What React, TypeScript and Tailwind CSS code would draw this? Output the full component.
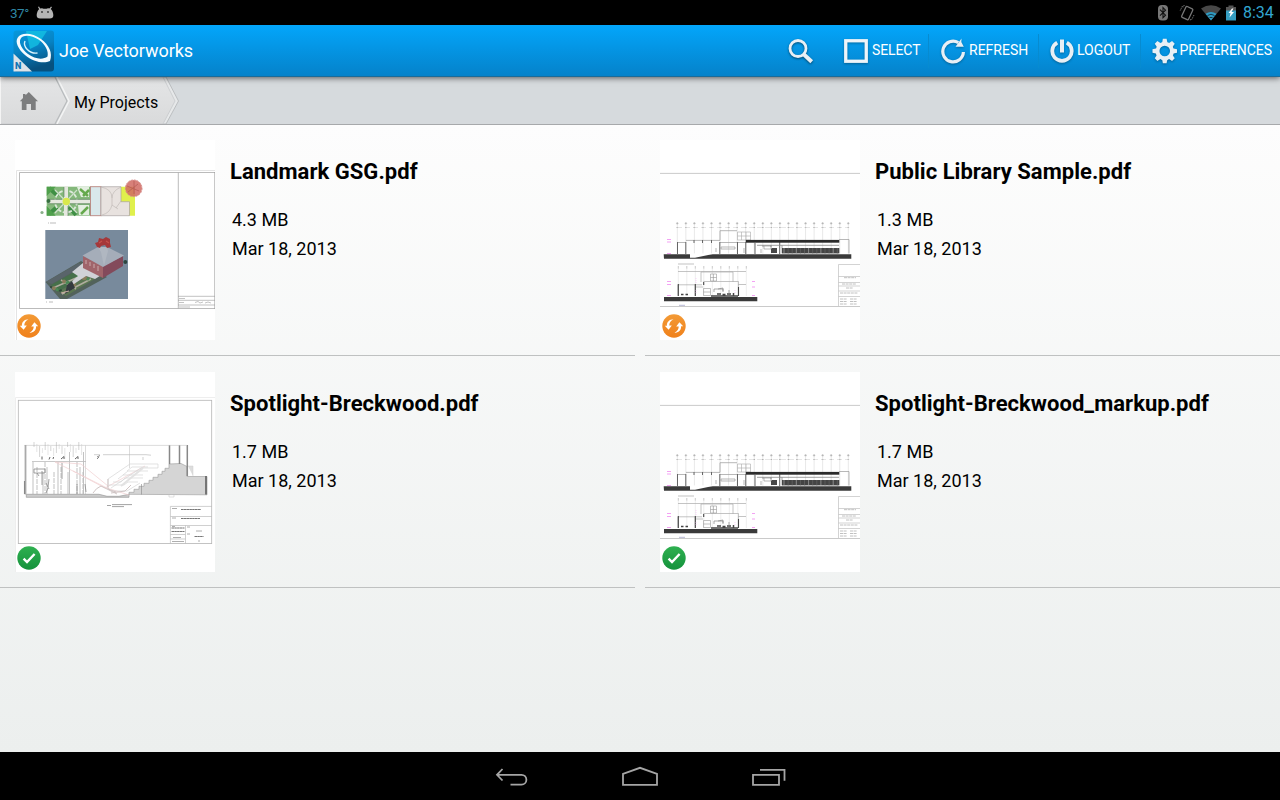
import type { ReactNode } from 'react';

type FileStatus = 'sync' | 'done';

interface ProjectFile {
  name: string;
  size: string;
  date: string;
  status: FileStatus;
  preview: ReactNode;
}

const range = (n: number) => Array.from({ length: n }, (_, i) => i);

/* ---------- Previews ---------- */

function LandmarkPreview() {
  return (
    <svg viewBox="0 0 200 200" className="block size-[200px] bg-white">
      <path d="M1.5 200V30.5H200" fill="none" stroke="#e4e4e4" />
      <path d="M200 32.5H4.5V168.5H200M163.3 32.5V168.5" fill="none" stroke="#aaa" strokeWidth="0.8" />
      <path d="M199.6 32V169M163 156.3h37M163 160.3h37M163 165h37" fill="none" stroke="#999" strokeWidth="0.6" />
      <path d="M164 158.5h6M164 162.5h5M164 167h11M180 162.5l3 -1 2 1.5 3 -1M190 163l3 -1 3 1" stroke="#aaa" strokeWidth="0.7" fill="none" />

      {/* Plan view */}
      <rect x="31.7" y="46.7" width="44" height="29" fill="#84b87b" />
      <path d="M34 48l9 8M34 74l8 -7M61 75l-7 -8" stroke="#3f8f45" strokeWidth="4" />
      <path d="M31.7 66l9 9.7h-9zM31.7 56v-9.300h9z" fill="#4fa04c" />
      <path d="M62 47h12v10h-8zM63 65h11v10h-10z" fill="#e3eee0" />
      <path d="M65 49l8 7M66 74l7 -7M68 56l6 -6" stroke="#65a94c" strokeWidth="2.500" />
      <circle cx="51" cy="61.5" r="11" fill="none" stroke="#dce8da" strokeWidth="1.8" strokeDasharray="4 1.5" />
      <path d="M40 50l22 23M62 50L40 73" stroke="#cfe0cb" strokeWidth="1.200" />
      <path d="M33 61.5H76M51 46V76" stroke="#e5e8df" strokeWidth="4" />
      <path d="M33 59.3h14M33 63.8h14M55 59.3h20M55 63.8h20M49 47v10M53 66v10" stroke="#56785a" strokeWidth="0.6" />
      <circle cx="51.3" cy="61.5" r="3.7" fill="#d9e94c" />
      <circle cx="33.5" cy="61" r="2" fill="#376f40" />
      <circle cx="27" cy="72.5" r="1.6" fill="#8ab08a" />
      <rect x="75.5" y="46.7" width="10.5" height="29" fill="#d9e8eb" stroke="#b9857f" strokeWidth="0.9" />
      <path d="M106 46.7h14v29h-7V62h-7z" fill="#e0f04c" />
      <path d="M86 46.7h20v15h8.500v14H86z" fill="#e8e2df" stroke="#aaa4a2" strokeWidth="0.7" />
      <path d="M86 47q11 2 11 11v7q-2 8 -10 10M106 47q-9 4 -9 11M97 65l6 4M106 61l-5 7" fill="none" stroke="#bab3b0" strokeWidth="0.6" />
      <circle cx="118.7" cy="48.3" r="8.3" fill="#d06a62" fillOpacity="0.85" stroke="#d58a88" strokeDasharray="2 1" />
      <path d="M112 46l12 5M119 41v13M113 52l10 -8" stroke="#b85c58" strokeWidth="0.8" />
      <path d="M33 83h1M35 83h6M31 162h1M34 162h4" stroke="#aaa" strokeWidth="0.8" />

      {/* Perspective view */}
      <rect x="30.3" y="90" width="82.7" height="69" fill="#788a9c" />
      <path d="M30.5 142L66 121 92 137 52 159h-7z" fill="#52625b" />
      <path d="M31 142L64 123l4 3 -31 18z" fill="#59646a" />
      <path d="M36 145l27 -15 9 4 -29 18z" fill="#46704a" />
      <path d="M44 151l30 -15 6 3 -29 17z" fill="#5a7652" />
      <path d="M38 148l30 -13M47 154l29 -15M46 140l15 9" stroke="#b0ad9f" strokeWidth="1.500" />
      {range(16).map((i) => (
        <circle
          key={i}
          cx={36 + ((i * 17) % 41)}
          cy={147 - ((i * 17) % 41) * 0.42 + (i % 4) * 2.5}
          r={1 + (i % 3) * 0.5}
          fill={i % 3 === 0 ? '#2b4836' : i % 3 === 1 ? '#4b8a56' : '#8a7c5b'}
        />
      ))}
      <path d="M57 132l11 -9 20 11 -8 5 -9 -3 -12 8 -4 -1 8 -7z" fill="#d0d2d6" />
      <path d="M50 154l2 -9 5 -4 3 7z" fill="#343b3f" />
      <path d="M46 153l8 -2" stroke="#c9b0a0" strokeWidth="1" />
      <path d="M68 116l20 10v12L68 128z" fill="#a0646a" />
      <path d="M88 126l20 -10v10l-20 12z" fill="#834a5b" />
      <path d="M71 120v4M75 122v4M79 124v4M83 126v5" stroke="#cba9aa" strokeWidth="1" />
      <path d="M67.5 115.5L83 107h9l17 8.5L88 127z" fill="#a5adb9" />
      <path d="M83 107l3 5 3 14 4 -15 -1 -4z" fill="#b0b7c1" />
      <path d="M82 107l-2 -4 3 -1 1 -4 4 1 3 -2 4 2v4l1 4 -4 1 -2 -3 -4 1 -1 2z" fill="#a5383a" />
      <path d="M84 103l3 -2M91 101l3 2" stroke="#c4514b" strokeWidth="1.300" />
      <circle cx="110.3" cy="122" r="2" fill="#2d463f" />
    </svg>
  );
}

function LibraryPreview() {
  return (
    <svg viewBox="0 0 200 200" className="block size-[200px] bg-white">
      <path d="M0 33.4H200M0 166.5H200" stroke="#c4c4c4" strokeWidth="0.9" />

      {/* Long elevation */}
      {range(21).map((i) => (
        <g key={i} stroke="#bbb">
          <path d={`M${17.3 + i * 8.55} 85V113.5`} strokeWidth="0.35" />
          <circle cx={17.3 + i * 8.55} cy="83.4" r="0.9" fill="#b5b5b5" strokeWidth="0.4" />
          <path d={`M${16.5 + i * 8.55} 87.5h1.6`} stroke="#999" strokeWidth="0.7" />
        </g>
      ))}
      <path d="M17 87.5H189" stroke="#ccc" strokeWidth="0.5" strokeDasharray="5 3" />
      <path d="M17 102.5h9M26 100.4h34M60 90.7h17M60 90.7v9.6M179 99.5h10v14M60 102.5h26" fill="none" stroke="#999" strokeWidth="0.7" />
      <path d="M77.5 92h13v8h-13zM77.5 96h13M81.5 92v8M86 92v8" fill="none" stroke="#aaa" strokeWidth="0.6" />
      <path d="M17.5 102v12M25.8 102v12M59.8 102v12M77.5 102v12M85.8 102v12M119.7 102v12M95 103v11M34 100v3M42.5 100v3M51.5 100v3" stroke="#666" strokeWidth="1" />
      <path d="M61 107h14v2H61zM104 106h7v3h-7zM84 108v5M101 109v4M56 108v4" fill="none" stroke="#999" strokeWidth="0.7" />
      <rect x="85.8" y="99.9" width="93.5" height="2.8" fill="#2b2b2b" />
      <path d="M97 105.3h82M122 105.3v8M103 105v2M111 105v2" stroke="#888" strokeWidth="0.8" />
      <rect x="122" y="108" width="57.3" height="5.4" fill="#444" />
      {range(14).map((i) => (
        <path key={i} d={`M${124 + i * 4.1} 108v5.5`} stroke={i % 3 ? '#666' : '#aaa'} strokeWidth="0.7" />
      ))}
      <path d="M111 113v-4l1 -1h5v5z" fill="#484848" />
      <path d="M3.7 114.3h187.6v4.5H4z" fill="#3a3a3a" />
      <path d="M30 113.8h24l-19 4h-5z" fill="#fff" />

      {/* Short elevation */}
      {range(9).map((i) => (
        <g key={i}>
          <path d={`M${18.3 + i * 8.5} 128V156`} stroke="#ccc" strokeWidth="0.35" />
          <path d={`M${18.3 + i * 8.5} 126v2.500`} stroke="#bbb" strokeWidth="0.8" />
        </g>
      ))}
      <path d="M18 131.5h68M18 124h16M41 132h32v10M41 132v10M18 144.8h24M18 144.8v11M35.3 145v11M35 147h8M43.5 141.5h35v14M78 144.500h8" fill="none" stroke="#aaa" strokeWidth="0.7" />
      <path d="M50.5 134h6v7h-6zM50.5 137.5h6M53.5 134v7M43.5 148.5h7v7h-7zM43.5 152h7" fill="none" stroke="#999" strokeWidth="0.6" />
      <path d="M18.3 144v12M35.3 144v12M78.5 147v9M43.7 142v3" stroke="#444" strokeWidth="1.1" />
      <path d="M21 154.500h2.500M25.500 154.500h2.500M57 154h4M62.500 154.500h3M67 154h4M73.500 153v3M51 156h27" fill="none" stroke="#444" strokeWidth="1.500" />
      <path d="M54 152v-3h9v2M58 149l5 -1v4M69 150v4" fill="none" stroke="#888" strokeWidth="0.700" />
      <path d="M4 157h93.3v4.2H4z" fill="#3a3a3a" />
      <path d="M7 99.5h4M7 102h4M7 113.5h4M7 141.5h4M7 144.5h4M7 155.5h4M92 141.5h3M92 147h3M92 155.5h3" stroke="#f08af0" strokeWidth="0.8" />
      <path d="M36 138v5M36 150v4M75 150v4" stroke="#f5b5f5" strokeWidth="0.6" strokeDasharray="1 1" />
      <path d="M19 165.3h6" stroke="#88b" strokeWidth="0.6" />

      {/* Title block */}
      <path d="M178.5 166V124.5H200M178.5 136.5H200M178.5 142.5H200M178.5 146H200M178.5 151H200M178.5 156.5H200" fill="none" stroke="#c0c0c0" strokeWidth="0.7" />
      <path d="M184 137.7h12M182 144h14M186 148h7M180 153h18M180 159h7M190 159h7M180 161.5h7M190 161.5h7M180 164h7M190 164h7" stroke="#b0b0b0" strokeWidth="0.8" strokeDasharray="3 0.6" />
    </svg>
  );
}

function SpotlightPreview() {
  return (
    <svg viewBox="0 0 200 200" className="block size-[200px] bg-white">
      <path d="M0.5 200V25.5H200" fill="none" stroke="#eee" />
      <rect x="3.3" y="28.3" width="193.4" height="143.3" fill="none" stroke="#b5b5b5" strokeWidth="0.8" />

      {/* Section through the stage and seating */}
      <path
        d="M114 122.3v-2h5v-3h5v-3h5v-3h5v-3h4v-3h5v-3h4v-3h3v-3h4V92l12 -0.5 6 3v10h20v18.3z"
        fill="#d5d5d5"
        stroke="#a5a5a5"
        strokeWidth="0.7"
      />
      <path d="M126.5 112v10.5" stroke="#888" strokeWidth="0.6" />
      <path d="M154.5 73v19M164.5 73v19M172.3 73v31" stroke="#888" strokeWidth="1.5" />
      <path d="M191 104v18.5" stroke="#666" strokeWidth="1.7" />
      <path d="M173 94h5v10" fill="#ddd" stroke="#ccc" strokeWidth="0.5" />
      <path d="M9.5 73.4H172M114.5 73.4V96M70.5 73.4v49" fill="none" stroke="#c5c5c5" strokeWidth="0.6" />
      <path d="M10.5 73v49.5" stroke="#aaa" strokeWidth="1.800" />
      <path d="M9.5 109v13" stroke="#888" strokeWidth="1.1" />
      <path d="M11.3 122.3H84l8 2h12l10 -2v3H11.3z" fill="#ccc" stroke="#999" strokeWidth="0.7" />

      {/* Rigging */}
      <path d="M17 89.5h54" stroke="#bbb" strokeWidth="0.8" />
      {range(18).map((i) => (
        <path key={i} d={`M${19 + i * 2.8} ${70 + (i % 4) * 2}v${5 + (i % 3) * 3}`} stroke={i % 2 ? '#ccc' : '#aaa'} strokeWidth="0.5" />
      ))}
      {[18, 22, 28, 30, 32, 39, 43, 46, 53, 62, 65, 68].map((x, i) => (
        <path key={x} d={`M${x} ${90 + (i % 3) * 5}V122`} stroke="#999" strokeWidth="0.6" strokeDasharray={i % 2 ? '5 1' : undefined} />
      ))}
      <path d="M27 84.500v3M34 87.500l1 -2.500M38 87l0.600 -2M46 87l3 -2.500v2.500M60 87l3 -2.500v2.500" fill="none" stroke="#666" strokeWidth="1" />
      <path d="M19 97h11v4H19zM22 101l2 3M34 107l-1 8M47 91v16M27 99v14M31 111l3 6M33 116l-2 5M62 112v10M70 112l1 8" fill="none" stroke="#888" strokeWidth="0.800" />
      <path d="M54.5 80v42M68.5 80v42" stroke="#bbb" strokeWidth="0.9" />
      <path d="M82 85l3 -1.500M82 87l2 -2" stroke="#888" strokeWidth="1" />
      <path d="M88 82.7h43M85 82.7h-6M131 82.7l5 0.5M128 85v3" stroke="#bbb" strokeWidth="0.7" />
      <path d="M40 90l52 26 22 7M40 90l26 2 27 22M58 99l32 17 40 -22" fill="none" stroke="#f0cfd0" strokeWidth="0.7" />

      {/* Seating rows */}
      <path d="M93 115v-8l22 -15h28v4M96 116l30 -20h17M98 110h8l4 -4h18M103 107l5 -4h20M108 103l5 -4h20M112 99l5 -4h16M94 113h15l4 -3h10M98 119h14l13 -8" fill="none" stroke="#d5d5d5" strokeWidth="0.7" />
      <path d="M93 107v10l8 3M96 121l14 -2 6 -6M78 121q3 -5 8 -7l16 8" fill="none" stroke="#d0c5c5" strokeWidth="1" />
      <path d="M128 96l-22 18" stroke="#e2e2e2" strokeWidth="2" />
      <path d="M154 123v2h5v-2" fill="none" stroke="#ccc" strokeWidth="0.6" />

      {/* Title block */}
      <path d="M92 133.5h4M97 132.6h20M97 134.6h12" stroke="#999" strokeWidth="0.9" />
      <path d="M155.4 171.5V134.4H197M155.4 144.5H197M155.4 153.5H197M155.4 162.5h15M170.5 153.5v18M155.4 167h15" fill="none" stroke="#bbb" strokeWidth="0.7" />
      <path d="M166 137.5h20M166 146.5h19M156.5 156h13M156.5 159.5h13M179.5 164.500h9" stroke="#777" strokeWidth="1.1" strokeDasharray="2.5 0.3" />
      <path d="M157 136.5h5M157 146h4M157 154.5h3M158 165.5h8M157 169.5h12M181 159h6M172 155h3M172 162h3M184 168v2" stroke="#999" strokeWidth="0.8" />
    </svg>
  );
}

/* ---------- Icons ---------- */

function StatusBadge({ status }: { status: FileStatus }) {
  if (status === 'sync') {
    return (
      <svg viewBox="0 0 24 24" className="absolute left-[2px] top-[174px] size-6">
        <defs>
          <linearGradient id="sync" x1="0" y1="0" x2="0" y2="1">
            <stop offset="0" stopColor="#f39a35" />
            <stop offset="1" stopColor="#f0811c" />
          </linearGradient>
        </defs>
        <circle cx="12" cy="12" r="11.7" fill="url(#sync)" />
        <path d="M11.5 5.2C7.500 5.200 4.600 8 4.900 11.800L2.800 11.800 6.600 15.800 9.800 11.500 7.300 11.600C7.200 9 8.600 6.800 11.500 5.200z" fill="#fff" />
        <path d="M12.500 18.800C16.500 18.800 19.400 16 19.100 12.200L21.200 12.200 17.400 8.200 14.200 12.500 16.700 12.400C16.800 15 15.400 17.200 12.500 18.800z" fill="#fff" />
      </svg>
    );
  }
  return (
    <svg viewBox="0 0 24 24" className="absolute left-[2px] top-[174px] size-6">
      <defs>
        <linearGradient id="done" x1="0" y1="0" x2="0" y2="1">
          <stop offset="0" stopColor="#2fb050" />
          <stop offset="1" stopColor="#15923c" />
        </linearGradient>
      </defs>
      <circle cx="12" cy="12" r="11.7" fill="url(#done)" />
      <path d="M6.6 12.6l3.4 3.4 7.600 -8" fill="none" stroke="#fff" strokeWidth="2.4" />
    </svg>
  );
}

function AppLogo() {
  return (
    <svg viewBox="0 0 42 42" className="size-[42px]">
      <defs>
        <linearGradient id="logo" x1="0" y1="0" x2="0.3" y2="1">
          <stop offset="0" stopColor="#0798dc" />
          <stop offset="0.5" stopColor="#0783c4" />
          <stop offset="1" stopColor="#07517f" />
        </linearGradient>
      </defs>
      <rect x="0.5" y="0.5" width="40.5" height="41" rx="3" fill="url(#logo)" />
      <path d="M13 1h21l-9 14 -8 4z" fill="#16c4e4" fillOpacity="0.75" />
      <path
        d="M37 31C31 34 20 32 12 25 5 19 2 12 4.500 8 8 2 19 2.500 28 9c8 6 12 14 9 22zM34.500 26.500C36 21 32 14 25.500 9.500 18 4.500 9.500 4.500 7.500 9 5.500 13 9 19.500 15 24c7 5.200 15 6 19.500 2.500z"
        fill="#f5fbff"
        fillRule="evenodd"
      />
      <path d="M12 11c-2.500 5.500 4.500 13 12.500 12" fill="none" stroke="#d9f2fb" strokeWidth="1.4" />
      <path d="M0.5 23.5L19 41.5H0.5z" fill="#dce3e9" />
      <text x="2" y="39" fontFamily="Roboto, sans-serif" fontSize="9" fontWeight="900" fill="#1675b4">N</text>
    </svg>
  );
}

function SearchIcon() {
  return (
    <svg viewBox="0 0 26 26" className="size-[26px] drop-shadow-[0_1px_1px_rgba(0,0,0,0.5)]" fill="none" stroke="#e8eff5">
      <circle cx="10" cy="10.5" r="8" strokeWidth="2.8" />
      <path d="M15.7 16.2l8 7.500" strokeWidth="4" />
    </svg>
  );
}

function SelectIcon() {
  return (
    <svg viewBox="0 0 24 24" className="size-6 drop-shadow-[0_1px_1px_rgba(0,0,0,0.3)]" fill="none" stroke="#eef4f9">
      <rect x="1.75" y="1.75" width="20.5" height="20.5" strokeWidth="3.300" />
    </svg>
  );
}

function RefreshIcon() {
  return (
    <svg viewBox="0 0 26 26" className="size-[26px] drop-shadow-[0_1px_1px_rgba(0,0,0,0.3)]">
      <path d="M18.300 4.600A10.300 10.300 0 1 0 23.400 14" fill="none" stroke="#e8eff5" strokeWidth="3.2" />
      <path d="M15.500 8.700l6 -8.200 -.2 3.500 2.500 4.700z" fill="#e8eff5" />
    </svg>
  );
}

function LogoutIcon() {
  return (
    <svg viewBox="0 0 24 24" className="size-6 drop-shadow-[0_1px_1px_rgba(0,0,0,0.3)]" fill="none" stroke="#e8eff5">
      <path d="M7.2 3.700a9.700 9.700 0 1 0 9.600 0" strokeWidth="3.800" />
      <path d="M12 0.500v13" strokeWidth="4" />
    </svg>
  );
}

function GearIcon() {
  return (
    <svg viewBox="-13 -13 26 26" className="size-[26px] drop-shadow-[0_1px_1px_rgba(0,0,0,0.3)]">
      {range(8).map((i) => (
        <path key={i} d="M-1.900 -12.500h3.800l.9 4.500h-5.600z" fill="#e8eff5" transform={`rotate(${i * 45})`} />
      ))}
      <circle r="7.4" fill="none" stroke="#e8eff5" strokeWidth="4" />
    </svg>
  );
}

/* ---------- Bars ---------- */

function StatusBar() {
  return (
    <div className="flex h-[25px] items-center justify-between bg-black pl-[10px] pr-[6px]">
      <div className="flex items-center gap-[7px]">
        <span className="w-[19px] whitespace-nowrap pt-[2px] text-[13.5px] leading-none tracking-[-0.5px] text-[#2f86a3]">37°</span>
        <svg viewBox="0 0 18 14" className="h-[14px] w-[18px]" fill="#b4b4b4">
          <path d="M4 3.5L2.5 .8M13.5 3.5L15.5 .8" stroke="#b4b4b4" strokeWidth="1.2" />
          <path d="M1 7Q2 2.5 6 2.3q3 1 6 0Q16 2.5 17 7q1.5 6 -4 5.5H5Q-.5 13 1 7z" />
          <circle cx="6" cy="6" r="0.9" fill="#333" />
          <circle cx="12" cy="6" r="0.9" fill="#333" />
        </svg>
      </div>
      <div className="flex items-center">
        <svg viewBox="0 0 10 16" className="h-4 w-[10px]">
          <rect width="10" height="15.5" rx="4" fill="#777" />
          <path d="M2 4.7l5.5 5.5L5 12.7v-10l2.5 2.5L2 10.7" fill="none" stroke="#111" strokeWidth="1.1" />
        </svg>
        <svg viewBox="0 0 16 18" className="ml-[11px] h-[18px] w-4" fill="none" stroke="#777">
          <rect x="4.500" y="3" width="7.500" height="12" rx="1" transform="rotate(25 8 9)" strokeWidth="1.3" />
          <path d="M3.500 2L1 7M5.300 1L4 3.500M15 11l-2.500 5M12 15l-1 2" strokeDasharray="1.5 1" />
        </svg>
        <svg viewBox="0 0 20 16" className="ml-[6px] h-4 w-5">
          <path d="M0 3.5Q10 -3 20 3.5L10 15.5z" fill="#484848" />
          <path d="M4.5 8.8Q10 5 15.5 8.8L10 15.500z" fill="#2f9cc4" />
          <path d="M6.5 10.5q3.5 -2.5 7 0M8.5 12.5h3" stroke="#163947" fill="none" />
        </svg>
        <svg viewBox="0 0 10 16" className="ml-[5px] h-4 w-[10px]">
          <path d="M0 2h2.5V.5h5V2H10v5H0z" fill="#555" />
          <path d="M0 5.5h10v10H0z" fill="#359ec2" />
          <path d="M6 3.5L2.5 8h2L3.5 12.5 8 7H5.5l2 -3.5z" fill="#fff" />
        </svg>
        <span className="ml-[7px] w-[31px] whitespace-nowrap pt-px text-[16px] leading-none text-[#33a5d0]">8:34</span>
      </div>
    </div>
  );
}

function ActionBar() {
  return (
    <header className="relative z-10 flex h-[52px] items-center border-b border-[#1c6b98] bg-gradient-to-b from-[#03a6fb] to-[#0582ca] pl-[13px] text-white shadow-[0_1px_6px_rgba(0,0,0,0.6)]">
      <AppLogo />
      <h1 className="ml-1 text-[18px] tracking-[-0.05px]">Joe Vectorworks</h1>
      <nav className="ml-auto flex h-full items-center pr-2 text-[14px]">
        <button className="flex w-[44px]"><SearchIcon /></button>
        <button className="ml-3 flex w-[84px] items-center gap-[4px]"><SelectIcon /><span className="tracking-[-0.100px]">SELECT</span></button>
        <span className="h-[34px] w-px bg-[#078bd0]" />
        <button className="ml-[11px] flex w-[98px] items-center gap-[3px]"><RefreshIcon />REFRESH</button>
        <span className="h-[34px] w-px bg-[#078bd0]" />
        <button className="ml-[11px] flex w-[90px] items-center gap-[3px]"><LogoutIcon />LOGOUT</button>
        <span className="h-[34px] w-px bg-[#078bd0]" />
        <button className="ml-[11px] flex w-[120px] items-center gap-[2px]"><GearIcon /><span className="tracking-[-0.050px]">PREFERENCES</span></button>
      </nav>
    </header>
  );
}

function Breadcrumbs() {
  return (
    <div className="relative h-12 border-b border-[#a7a9ab] bg-[#d6dadd]">
      <svg viewBox="0 0 200 47" className="absolute left-0 top-0 h-[47px] w-[200px]">
        <defs>
          <linearGradient id="crumb" x1="0" y1="0" x2="0" y2="1">
            <stop offset="0" stopColor="#e4e5e6" />
            <stop offset="1" stopColor="#d9dadb" />
          </linearGradient>
        </defs>
        <path d="M0 0H166L178.500 24 166 47H0z" fill="#e6e8e9" stroke="#bbbec0" />
        <path d="M0 0H163L175 24 163 47H0z" fill="url(#crumb)" stroke="#c6c9cb" strokeWidth="0.8" />
        <path d="M55 0L67 24 55 47" fill="none" stroke="#b8bbbd" strokeWidth="1.2" />
        <path d="M57 0L69 24 57 47" fill="none" stroke="#f3f4f4" strokeWidth="1.500" />
        <path d="M0.5 0V47" stroke="#f4f4f4" />
        <path d="M28.8 15L38 24.3h-2.300V33h-4.700v-6h-4.500v6h-4.700v-8.700H19.800L23 21v-4h2.500v1.300z" fill="#7c7d7e" />
      </svg>
      <span className="relative ml-[74px] flex h-[52px] items-center text-[16px] text-black">My Projects</span>
    </div>
  );
}

function NavBar() {
  return (
    <footer className="flex h-12 items-center justify-center gap-[94px] bg-black pt-[2px]">
      <svg viewBox="0 0 34 24" className="h-6 w-[34px]" fill="none" stroke="#a5a5a5" strokeWidth="1.8">
        <path d="M8.500 4L3 9.800l5.500 5.700M3 9.800h24.500a4.800 4.800 0 0 1 0 9.800H16.500" />
      </svg>
      <svg viewBox="0 0 36 24" className="h-6 w-9" fill="none" stroke="#a5a5a5" strokeWidth="1.8">
        <path d="M1 19.800V9L18 2.8 35 9v10.800z" />
      </svg>
      <svg viewBox="0 0 34 24" className="h-6 w-[34px]" fill="none" stroke="#a5a5a5" strokeWidth="1.8">
        <path d="M1 9.800h26v10H1zM8 4.800h24.500v11" />
      </svg>
    </footer>
  );
}

/* ---------- Files ---------- */

const files: ProjectFile[] = [
  { name: 'Landmark GSG.pdf', size: '4.3 MB', date: 'Mar 18, 2013', status: 'sync', preview: <LandmarkPreview /> },
  { name: 'Public Library Sample.pdf', size: '1.3 MB', date: 'Mar 18, 2013', status: 'sync', preview: <LibraryPreview /> },
  { name: 'Spotlight-Breckwood.pdf', size: '1.7 MB', date: 'Mar 18, 2013', status: 'done', preview: <SpotlightPreview /> },
  { name: 'Spotlight-Breckwood_markup.pdf', size: '1.7 MB', date: 'Mar 18, 2013', status: 'done', preview: <LibraryPreview /> },
];

function FileCard({ file }: { file: ProjectFile }) {
  return (
    <article className="flex h-[231px] border-b border-[#bfc1c1] pl-[15px] pt-[15px]">
      <div className="relative size-[200px] shrink-0">
        {file.preview}
        <StatusBadge status={file.status} />
      </div>
      <div className="ml-[15px] pt-4 text-black">
        <h2 className="whitespace-nowrap text-[22px] font-bold leading-8 tracking-[0.03px]">{file.name}</h2>
        <div className="ml-[2px] mt-[18px] text-[18px] leading-[28.5px]">
          <p>{file.size}</p>
          <p>{file.date}</p>
        </div>
      </div>
    </article>
  );
}

export default function App() {
  return (
    <div className="flex h-[800px] w-[1280px] flex-col overflow-hidden font-['Roboto',sans-serif]">
      <StatusBar />
      <ActionBar />
      <Breadcrumbs />
      <main className="flex-1 bg-gradient-to-b from-[#fdfdfd] to-[#ecefee]">
        <div className="grid grid-cols-2 gap-x-[10px] gap-y-px">
          {files.map((file) => (
            <FileCard key={file.name} file={file} />
          ))}
        </div>
      </main>
      <NavBar />
    </div>
  );
}
